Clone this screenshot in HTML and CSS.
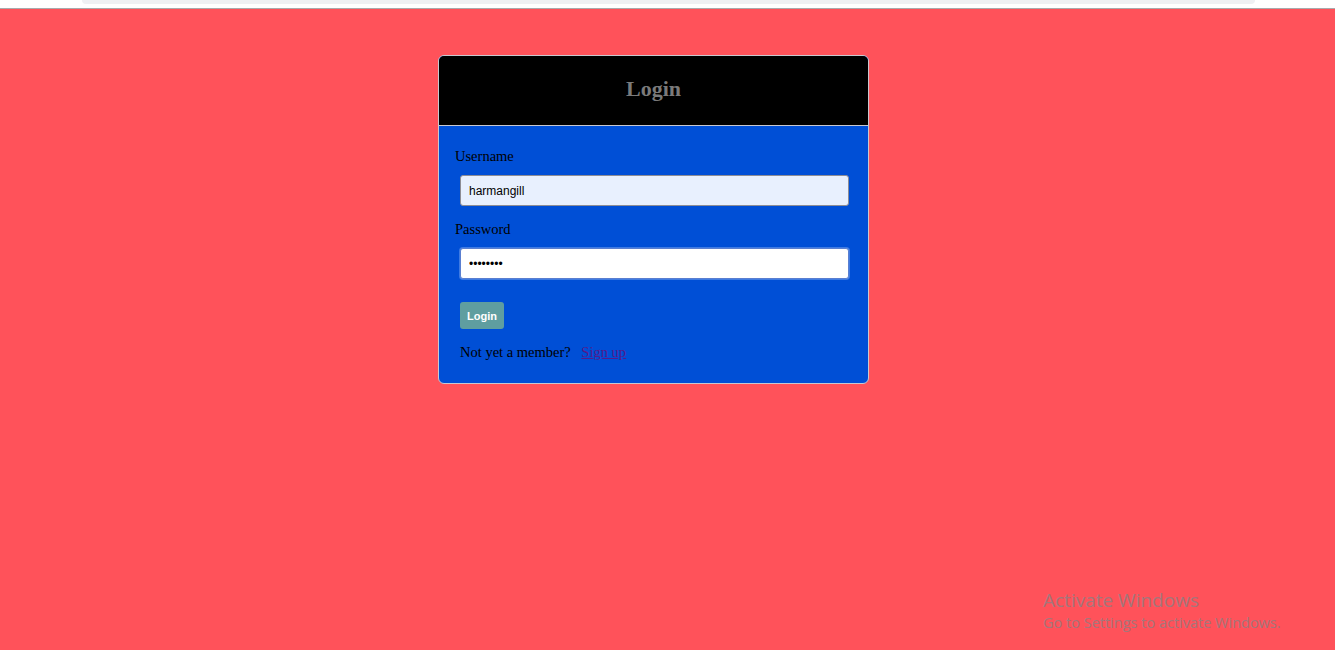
FILE: index.html
```html
<!DOCTYPE html>
<html>
<head>
<meta charset="utf-8">
<title>Login</title>
<link rel="stylesheet" href="styles.css">
</head>
<body>
<div class="topbar"><div class="topbar-panel"></div></div>
<main class="page">
  <div class="card">
    <div class="card-header"><h2 class="card-title">Login</h2></div>
    <form class="card-body">
      <label class="field-label">Username</label>
      <input class="field-input autofilled" type="text" value="harmangill">
      <label class="field-label second">Password</label>
      <input class="field-input focused" type="password" value="password">
      <button class="btn" type="button">Login</button>
      <p class="signup">Not yet a member? <a class="signup-link" href="#">Sign up</a></p>
    </form>
  </div>
  <div class="watermark">
    <div class="wm-title">Activate Windows</div>
    <div class="wm-sub">Go to Settings to activate Windows.</div>
  </div>
</main>
</body>
</html>
```
FILE: styles.css
```css
html, body {
  margin: 0;
  padding: 0;
}
body {
  background: #ff525a;
  font-family: "Liberation Serif", "Times New Roman", serif;
  height: 650px;
  overflow: hidden;
}
.topbar {
  height: 8px;
  background: #ffffff;
  border-bottom: 1px solid #a9a9ab;
}
.topbar-panel {
  margin: 0 80px 0 82px;
  height: 4px;
  background: #eff0f3;
  border-radius: 0 0 6px 6px;
}
.page {
  position: relative;
  height: 641px;
  padding-top: 46px;
  box-sizing: border-box;
}
.card {
  width: 431px;
  margin: 0 0 0 438px;
  box-sizing: border-box;
  border: 1px solid #c8c8d0;
  border-radius: 6px;
  overflow: hidden;
  background: #004fd6;
}
.card-header {
  background: #000000;
  height: 69px;
  border-bottom: 1px solid #c8c8d0;
  display: flex;
  align-items: center;
  justify-content: center;
}
.card-title {
  margin: 0;
  color: #7a7a7a;
  font-size: 22px;
  font-weight: bold;
  position: relative;
  top: -2px;
}
.card-body {
  display: flex;
  flex-direction: column;
  align-items: flex-start;
  padding: 22px 17px 23px 16px;
}
.field-label {
  font-size: 14.5px;
  line-height: 16px;
  color: #000;
}
.field-label.second {
  margin-top: 15px;
}
.field-input {
  margin: 11px 0 0 5px;
  width: 389px;
  height: 31px;
  box-sizing: border-box;
  border: 1px solid #8d8d95;
  border-radius: 3px;
  padding: 0 8px;
  font-family: "Liberation Sans", Arial, sans-serif;
  font-size: 12px;
  color: #000;
  background: #ffffff;
  outline: none;
}
.field-input.autofilled {
  background: #e8f0fe;
}
.field-input.focused {
  border: 1px solid #5a7fd0;
  box-shadow: 0 0 0 1px #3f7be3;
}
.btn {
  margin: 23px 0 0 5px;
  height: 27px;
  padding: 0 7px;
  border: none;
  border-radius: 3px;
  background: #5f9ea0;
  color: #ffffff;
  font-family: "Liberation Sans", Arial, sans-serif;
  font-weight: bold;
  font-size: 11px;
}
.signup {
  margin: 15px 0 0 5px;
  font-size: 14.5px;
  line-height: 16px;
  color: #000;
}
.signup-link {
  margin-left: 7px;
  color: #551a8b;
}
.watermark {
  position: absolute;
  left: 1043px;
  top: 579px;
  font-family: "Open Sans", "Noto Sans", sans-serif;
  color: #a5767b;
}
.wm-title {
  font-size: 19px;
  line-height: 25px;
}
.wm-sub {
  font-size: 14.5px;
  line-height: 20px;
}
```
